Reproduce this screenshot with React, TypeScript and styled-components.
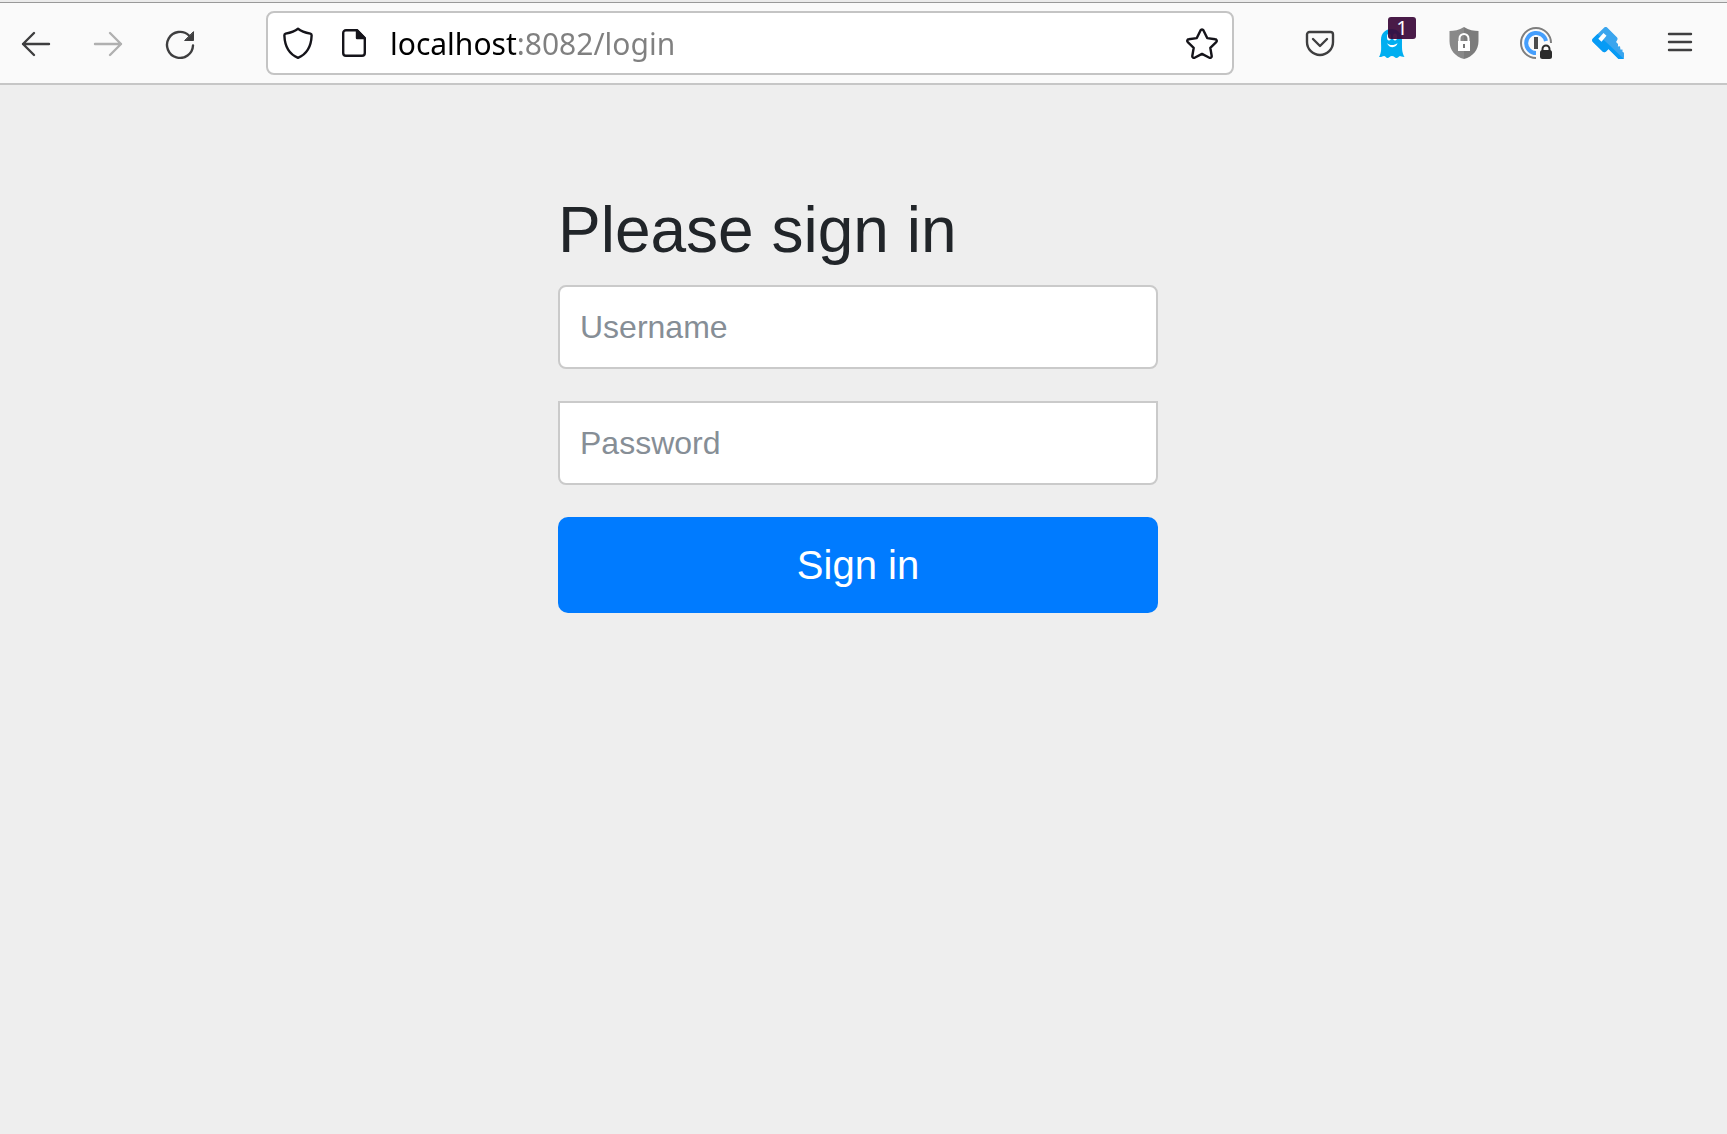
import React, { useState } from 'react';
import styled, { createGlobalStyle, css } from 'styled-components';

const GlobalStyle = createGlobalStyle`
  *, *::before, *::after { box-sizing: border-box; }
  html { background: #eeeeee; }
  body { margin: 0; font-family: 'Liberation Sans', Arial, sans-serif; color: #212529; }
`;

const TabStrip = styled.div`
  height: 3px;
  background: #ebebeb;
  border-bottom: 1px solid #999999;
`;

const Toolbar = styled.header`
  display: flex;
  align-items: center;
  gap: 50px;
  height: 82px;
  padding-right: 11px;
  background: #fafafa;
  border-bottom: 2px solid #c6c6c6;
`;

const ButtonGroup = styled.nav`
  display: flex;
  flex: none;
`;

const ToolButton = styled.button`
  position: relative;
  display: grid;
  place-items: center;
  width: 72px;
  height: 64px;
  padding: 0;
  border: 0;
  background: none;
  color: #3e3e3f;

  &:disabled { color: #b0b0b0; }
`;

const Badge = styled.span`
  position: absolute;
  top: 6px;
  right: 12px;
  width: 28px;
  height: 22px;
  border-radius: 3px;
  background: rgba(58, 8, 56, 0.92);
  color: #ffffff;
  font: 20px/22px 'Noto Sans', sans-serif;
  text-align: center;
`;

const AddressBar = styled.div`
  display: flex;
  flex: 1;
  align-items: center;
  min-width: 0;
  height: 64px;
  border: 2px solid #c4c4c4;
  border-radius: 8px;
  background: #ffffff;
`;

const AddressButton = styled.button`
  display: grid;
  flex: none;
  place-items: center;
  width: 60px;
  height: 60px;
  padding: 0;
  border: 0;
  background: none;
  color: #15141a;
`;

const PageInfoButton = styled(AddressButton)`
  width: 52px;
`;

const AddressInput = styled.input`
  flex: 1;
  min-width: 0;
  height: 60px;
  padding: 0 0 0 10px;
  border: 0;
  outline: 0;
  background: linear-gradient(to right, #000000 138px, #808080 138px);
  -webkit-background-clip: text;
  background-clip: text;
  color: #808080;
  -webkit-text-fill-color: transparent;
  font: 30px 'Noto Sans', sans-serif;
`;

const Page = styled.main`
  display: flex;
  justify-content: center;
  padding: 107px 11px 40px 0;
`;

const SignInForm = styled.form`
  display: flex;
  flex-direction: column;
  gap: 32px;
  width: 100%;
  max-width: 600px;
`;

const Heading = styled.h2`
  margin: 0 0 -16px;
  font-size: 64px;
  font-weight: 400;
  line-height: 77px;
`;

const Field = styled.input<{ $squareTop?: boolean }>`
  display: block;
  width: 100%;
  height: 84px;
  padding: 0 20px;
  border: 2px solid #cacaca;
  border-radius: 8px;
  background: #ffffff;
  color: #495057;
  font: 32px 'Liberation Sans', Arial, sans-serif;
  ${({ $squareTop }) => $squareTop && css`
    border-top-left-radius: 0;
    border-top-right-radius: 0;
  `}

  &::placeholder { color: #868e96; opacity: 1; }
`;

const SubmitButton = styled.button`
  height: 96px;
  padding: 0 32px;
  border: 0;
  border-radius: 10px;
  background: #007bff;
  color: #ffffff;
  font: 40px/60px 'Liberation Sans', Arial, sans-serif;
`;

const Icon = ({ children }: { children: React.ReactNode }) => (
  <svg width="32" height="32" viewBox="0 0 32 32" fill="none" stroke="currentColor"
    strokeWidth="2.4" strokeLinecap="round" strokeLinejoin="round" aria-hidden="true">
    {children}
  </svg>
);

const BackIcon = () => <Icon><path d="M29 17H3M14 6 3 17l11 11" /></Icon>;
const ForwardIcon = () => <Icon><path d="M3 17h26M18 6l11 11-11 11" /></Icon>;
const ReloadIcon = () => (
  <Icon>
    <path d="M29 18.500A13 13 0 1 1 25 8.500" />
    <path d="M29.500 5v8.500H21z" fill="currentColor" strokeWidth="1" />
  </Icon>
);
const ShieldIcon = () => (
  <Icon><path d="M16 1.700c3.500 2.700 8 4 12.400 5 1 .3 1.300 1 1.200 2C29.200 19 25 27 16 30.800 7 27 2.800 19 2.400 8.700c-.1-1 .2-1.700 1.200-2C8 5.700 12.500 4.400 16 1.700z" /></Icon>
);
const PageIcon = () => (
  <Icon>
    <path d="M19 3.200H8A2.800 2.800 0 0 0 5.200 6v20A2.800 2.800 0 0 0 8 28.800h16a2.800 2.800 0 0 0 2.800-2.800V11z" />
    <path d="M19 3.500V11h7.500z" fill="currentColor" />
  </Icon>
);
const StarIcon = () => (
  <Icon><path d="M14.500 3.400a1.700 1.700 0 0 1 3 0l3.700 7.700 8.100 1.200a1.600 1.600 0 0 1 .9 2.800l-5.900 5.700 1.400 8.200a1.600 1.600 0 0 1-2.300 1.700L16 26.900l-7.400 3.800a1.600 1.600 0 0 1-2.300-1.700l1.400-8.200-5.900-5.700a1.600 1.600 0 0 1 .9-2.800l8.100-1.200z" /></Icon>
);
const PocketIcon = () => (
  <Icon>
    <path d="M5.500 5h21A2.500 2.500 0 0 1 29 7.500V15a13 13 0 0 1-26 0V7.500A2.500 2.500 0 0 1 5.500 5z" />
    <path d="m9 12 7 7 7-7" />
  </Icon>
);
const GhostIcon = () => (
  <Icon>
    <g stroke="none">
      <path fill="#00aef0" d="M5 13C5 6 9.500 2 15.500 2S26 6 26 13c0 8-.5 12 2.500 17-2.500 0-4-1-4.500-1-1.500.5-2 2-3.500 2S18 29 16 29s-3 2-4.500 2S9.500 29 8 29s-2.500 1.500-5 1c3-5 2-9 2-17z" />
      <path fill="#fff" d="M11 16c2.500 2.700 7.500 2.700 10.500 0-.5 5-8.500 6-10.500 0z" />
      <ellipse cx="13" cy="10" rx="2" ry="3.500" fill="#fff" />
      <ellipse cx="19" cy="10" rx="2" ry="3.500" fill="#fff" />
    </g>
  </Icon>
);
const LockShieldIcon = () => (
  <Icon>
    <g stroke="none">
      <path fill="#898989" d="M16 0C11 3.200 6 4 1.500 4v10C1.500 23 7 29.500 16 32z" />
      <path fill="#7c7c7c" d="M16 0c5 3.200 10 4 14.500 4v10c0 9-5.500 15.500-14.500 18z" />
      <path fill="#fff" d="M10 14h12v10H10z" />
      <path fill="#777777" d="M15 17h2v4h-2z" />
    </g>
    <path stroke="#fff" strokeWidth="2" d="M11.500 14v-2.500a4.500 4.500 0 0 1 9 0V14" />
  </Icon>
);
const PasswordRingIcon = () => (
  <Icon>
    <g strokeLinecap="butt">
      <path stroke="#7e7e7e" strokeWidth="2" d="M16 31A15 15 0 1 1 31 16" />
      <path stroke="#459efc" strokeWidth="4" d="M16 26A10 10 0 1 1 26 14" />
      <path stroke="#4c4c4c" strokeWidth="4" d="M16 10v12" />
    </g>
    <rect x="20" y="23" width="12" height="9" rx="2.500" fill="#2b2b2b" stroke="none" />
    <path stroke="#2b2b2b" strokeWidth="2" d="M22.500 24v-2a3.500 3.500 0 0 1 7 0v2" />
  </Icon>
);
const KeyIcon = () => (
  <Icon>
    <g stroke="none">
      <path fill="#3aa5ee" d="M12 .7a2.500 2.500 0 0 1 3.400 0l9.500 9.500c.8.8.9 2 .2 3l-1.200 2 2.500 5.300 1.600 2.600 1.200-.6.6 2.300 1.800.4V32h-5L16.500 22 14 24.500a2.500 2.500 0 0 1-3.400 0L.7 14.800a2.500 2.500 0 0 1 0-3z" />
      <path fill="#3aa5ee" d="m22 13 4 4v2.500l2-.2.500 3.500 2-.3v3l1.500.5V32z" />
      <path fill="#079bf5" d="M5.500 7 32 32h-5.500L16.500 22 14 24.500a2.500 2.500 0 0 1-3.400 0L.7 14.800a2.500 2.500 0 0 1 0-3z" />
      <path fill="#fff" d="m11.500 6 3 2.700-5 6-3.200-3z" />
    </g>
  </Icon>
);
const MenuIcon = () => <Icon><path d="M5 7h22M5 15h22M5 23h22" /></Icon>;

const App = () => {
  const [address, setAddress] = useState('localhost:8082/login');

  return (
    <>
      <GlobalStyle />
      <TabStrip />
      <Toolbar>
        <ButtonGroup aria-label="Navigation">
          <ToolButton aria-label="Back"><BackIcon /></ToolButton>
          <ToolButton aria-label="Forward" disabled><ForwardIcon /></ToolButton>
          <ToolButton aria-label="Reload"><ReloadIcon /></ToolButton>
        </ButtonGroup>
        <AddressBar>
          <AddressButton aria-label="Tracking protection"><ShieldIcon /></AddressButton>
          <PageInfoButton aria-label="Page information"><PageIcon /></PageInfoButton>
          <AddressInput aria-label="Address" value={address} spellCheck={false}
            onChange={(event) => setAddress(event.target.value)} />
          <AddressButton aria-label="Bookmark"><StarIcon /></AddressButton>
        </AddressBar>
        <ButtonGroup aria-label="Extensions">
          <ToolButton aria-label="Pocket"><PocketIcon /></ToolButton>
          <ToolButton aria-label="Trackers"><GhostIcon /><Badge>1</Badge></ToolButton>
          <ToolButton aria-label="Privacy"><LockShieldIcon /></ToolButton>
          <ToolButton aria-label="Passwords"><PasswordRingIcon /></ToolButton>
          <ToolButton aria-label="Key"><KeyIcon /></ToolButton>
          <ToolButton aria-label="Menu"><MenuIcon /></ToolButton>
        </ButtonGroup>
      </Toolbar>
      <Page>
        <SignInForm onSubmit={(event) => event.preventDefault()}>
          <Heading>Please sign in</Heading>
          <Field type="text" name="username" aria-label="Username" placeholder="Username" />
          <Field type="password" name="password" aria-label="Password" placeholder="Password" $squareTop />
          <SubmitButton type="submit">Sign in</SubmitButton>
        </SignInForm>
      </Page>
    </>
  );
};

export default App;
